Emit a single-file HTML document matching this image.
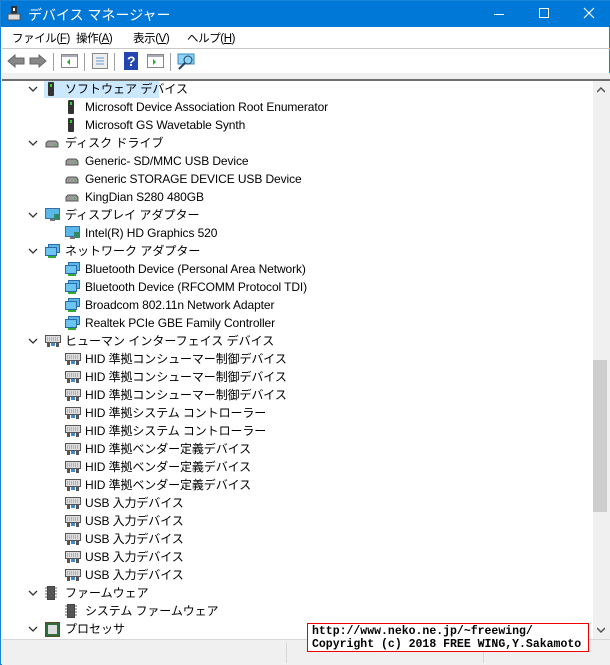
<!DOCTYPE html>
<html><head><meta charset="utf-8"><style>
*{margin:0;padding:0;box-sizing:border-box}
body{width:610px;height:665px;overflow:hidden;background:#fff;font-family:"Liberation Sans","Noto Sans CJK JP",sans-serif;font-size:12px;color:#000;position:relative}
.win{position:absolute;left:0;top:0;width:610px;height:665px;border:1px solid #1883d7}
.title{position:absolute;left:0;top:0;width:610px;height:26px;background:#0078d7;color:#fff}
.title .t{position:absolute;left:27px;top:4px;font-size:14px}
.menu{position:absolute;top:26px;left:1px;width:608px;height:22px;border-bottom:1px solid #c8c8c8}
.menu span{position:absolute;top:3px;font-size:11.5px;letter-spacing:-0.4px}
.tb{position:absolute;top:49px;left:1px;width:608px;height:23px}
.band{position:absolute;top:72px;left:1px;width:608px;height:6px;background:#f0f0f0}
.tree{position:absolute;top:78px;left:1px;width:591px;height:560px;border-top:2px solid #6e6e6e;overflow:hidden}
.row{position:absolute;height:18px;line-height:18px;white-space:nowrap}
.row svg{position:absolute;top:2px}
.sel{position:absolute;left:42px;top:-1px;width:115px;height:18px;background:#cce8ff}
.sb{position:absolute;left:592px;top:78px;width:17px;height:560px;background:#f0f0f0;border-top:2px solid #6e6e6e}
.thumb{position:absolute;left:0;top:279px;width:14px;height:152px;background:#cdcdcd}
.status{position:absolute;left:1px;top:638px;width:608px;height:26px;background:#f0f0f0;border-top:1px solid #d7d7d7}
.status i{position:absolute;top:3px;width:1px;height:20px;background:#d7d7d7}
.red{position:absolute;left:306px;top:622px;width:282px;height:29px;border:1px solid #e00;background:#fff;font-family:"Liberation Mono",monospace;font-size:11.5px;font-weight:bold;line-height:13px;padding:1px 4px}
.sep{position:absolute;top:3px;width:1px;height:18px;background:#a0a0a0}
</style></head><body>
<div class="win">
<div class="title">
<svg style="position:absolute;left:6px;top:5px" width="14" height="16"><rect x="4" y="0" width="6" height="9" fill="#333"/><rect x="6" y="2" width="2" height="3" fill="#fff"/><rect x="1" y="8" width="12" height="6" fill="#ddd" stroke="#555"/></svg>
<span class="t">デバイス マネージャー</span>
<div style="position:absolute;left:493px;top:13px;width:10px;height:1px;background:#fff"></div>
<div style="position:absolute;left:538px;top:7px;width:10px;height:10px;border:1px solid #fff"></div>
<svg style="position:absolute;left:582px;top:6px" width="12" height="12"><path d="M1 1L11 11M11 1L1 11" stroke="#fff" stroke-width="1.2"/></svg>
</div>
<div class="menu"><span style="left:10px">ファイル(<u>F</u>)</span><span style="left:74px">操作(<u>A</u>)</span><span style="left:131px">表示(<u>V</u>)</span><span style="left:185px">ヘルプ(<u>H</u>)</span></div>
<div class="tb">
<svg style="position:absolute;left:5px;top:4px" width="40" height="14"><path d="M1 7L8 1V4H17V10H8V13Z" fill="#888" stroke="#666"/><path d="M39 7L32 1V4H23V10H32V13Z" fill="#888" stroke="#666"/></svg>
<div class="sep" style="left:51px"></div>
<svg style="position:absolute;left:59px;top:4px" width="18" height="15"><rect x=".5" y=".5" width="16" height="13" fill="#fff" stroke="#888"/><rect x="1" y="1" width="15" height="2" fill="#aab"/><path d="M9 5L6 8L9 11Z" fill="#2a2"/></svg>
<div class="sep" style="left:82px"></div>
<svg style="position:absolute;left:90px;top:3px" width="16" height="17"><rect x=".5" y=".5" width="15" height="15" fill="#eee" stroke="#888"/><path d="M4 5H12M4 8H12M4 11H12" stroke="#69c"/></svg>
<div class="sep" style="left:112px"></div>
<svg style="position:absolute;left:122px;top:2px" width="14" height="18"><rect width="14" height="18" fill="#2346b0"/><text x="3" y="14" fill="#fff" font-size="14" font-weight="bold" font-family="Liberation Sans">?</text></svg>
<svg style="position:absolute;left:145px;top:4px" width="18" height="15"><rect x=".5" y=".5" width="16" height="13" fill="#fff" stroke="#888"/><rect x="1" y="1" width="15" height="2" fill="#aab"/><path d="M6 5L9 8L6 11Z" fill="#2a2"/></svg>
<div class="sep" style="left:168px"></div>
<svg style="position:absolute;left:175px;top:3px" width="18" height="17"><rect x="1" y="1" width="16" height="10" fill="#8cd3f5" stroke="#3a8ac0"/><circle cx="11" cy="7" r="4" fill="none" stroke="#246"/><path d="M8 10L2 16" stroke="#246" stroke-width="2"/></svg>
</div>
<div class="band"></div>
<div class="tree">
<div class="sel"></div>
<div id="rows"></div>
</div>
<div class="sb">
<svg style="position:absolute;left:4px;top:6px" width="8" height="6"><path d="M0 5L4 1L8 5" stroke="#555" stroke-width="1.5" fill="none"/></svg>
<div class="thumb"></div>
<svg style="position:absolute;left:4px;top:546px" width="8" height="6"><path d="M0 1L4 5L8 1" stroke="#555" stroke-width="1.5" fill="none"/></svg>
</div>
<div class="status"><i style="left:284px"></i><i style="left:481px"></i></div>
<div class="red">http://www.neko.ne.jp/~freewing/<br>Copyright (c) 2018 FREE WING,Y.Sakamoto</div>
</div>
<script>
var I={
sw:'<svg width="12" height="14"><rect x="3" y="0" width="6" height="14" rx="1" fill="#333"/><rect x="5" y="2" width="2" height="3" fill="#3c3"/></svg>',
dk:'<svg width="14" height="14"><path d="M1 7L3 5H11L13 7V11H1Z" fill="#999" stroke="#555"/><rect x="9" y="8" width="2" height="1" fill="#3c3"/></svg>',
mo:'<svg width="16" height="14"><rect x=".5" y=".5" width="14" height="10" fill="#5ab8e8" stroke="#3a6ea5"/><rect x="9" y="6" width="6" height="6" fill="#386" /><rect x="5" y="11" width="5" height="2" fill="#777"/></svg>',
nw:'<svg width="16" height="15"><rect x="3.5" y=".5" width="11" height="8" fill="#5ab8e8" stroke="#2a6aa5"/><rect x=".5" y="3.5" width="11" height="8" fill="#6cc4f0" stroke="#2a6aa5"/><rect x="3" y="12" width="8" height="2" fill="#3a3"/></svg>',
kb:'<svg width="16" height="14"><rect x=".5" y="1.5" width="15" height="7" fill="#ddd" stroke="#555"/><path d="M2 4H14M2 6H14" stroke="#888" stroke-dasharray="1 1"/><rect x="2" y="9" width="3" height="4" fill="#555"/><rect x="11" y="9" width="3" height="4" fill="#555"/><rect x="6" y="9" width="4" height="3" fill="#48c"/></svg>',
fw:'<svg width="12" height="15"><rect x="2" y="0" width="8" height="14" fill="#444"/><path d="M0 2H2M0 5H2M0 8H2M0 11H2M10 2H12M10 5H12M10 8H12M10 11H12" stroke="#666"/><rect x="3" y="1" width="6" height="12" fill="#555"/></svg>',
cp:'<svg width="15" height="15"><rect x=".5" y=".5" width="14" height="14" fill="#2d6e3a" stroke="#5a4a20"/><rect x="3" y="3" width="9" height="9" fill="#ddd"/></svg>'};
var R=[[1,'sw','ソフトウェア デバイス'],[0,'sw','Microsoft Device Association Root Enumerator'],[0,'sw','Microsoft GS Wavetable Synth'],
[1,'dk','ディスク ドライブ'],[0,'dk','Generic- SD/MMC USB Device'],[0,'dk','Generic STORAGE DEVICE USB Device'],[0,'dk','KingDian S280 480GB'],
[1,'mo','ディスプレイ アダプター'],[0,'mo','Intel(R) HD Graphics 520'],
[1,'nw','ネットワーク アダプター'],[0,'nw','Bluetooth Device (Personal Area Network)'],[0,'nw','Bluetooth Device (RFCOMM Protocol TDI)'],[0,'nw','Broadcom 802.11n Network Adapter'],[0,'nw','Realtek PCIe GBE Family Controller'],
[1,'kb','ヒューマン インターフェイス デバイス'],[0,'kb','HID 準拠コンシューマー制御デバイス'],[0,'kb','HID 準拠コンシューマー制御デバイス'],[0,'kb','HID 準拠コンシューマー制御デバイス'],[0,'kb','HID 準拠システム コントローラー'],[0,'kb','HID 準拠システム コントローラー'],[0,'kb','HID 準拠ベンダー定義デバイス'],[0,'kb','HID 準拠ベンダー定義デバイス'],[0,'kb','HID 準拠ベンダー定義デバイス'],[0,'kb','USB 入力デバイス'],[0,'kb','USB 入力デバイス'],[0,'kb','USB 入力デバイス'],[0,'kb','USB 入力デバイス'],[0,'kb','USB 入力デバイス'],
[1,'fw','ファームウェア'],[0,'fw','システム ファームウェア'],[1,'cp','プロセッサ']];
var h='';R.forEach(function(r,k){var t=-1+18*k;
if(r[0])h+='<div class="row" style="left:0;top:'+t+'px;width:300px"><svg style="left:26px;top:6px" width="10" height="6"><path d="M1 1L5 5L9 1" stroke="#333" stroke-width="1.3" fill="none"/></svg><span style="position:absolute;left:43px">'+I[r[1]]+'</span><span style="position:absolute;left:63px">'+r[2]+'</span></div>';
else h+='<div class="row" style="left:0;top:'+t+'px;width:400px"><span style="position:absolute;left:63px">'+I[r[1]]+'</span><span style="position:absolute;left:83px;letter-spacing:-0.1px">'+r[2]+'</span></div>';});
document.getElementById('rows').innerHTML=h;
</script>
</body></html>
